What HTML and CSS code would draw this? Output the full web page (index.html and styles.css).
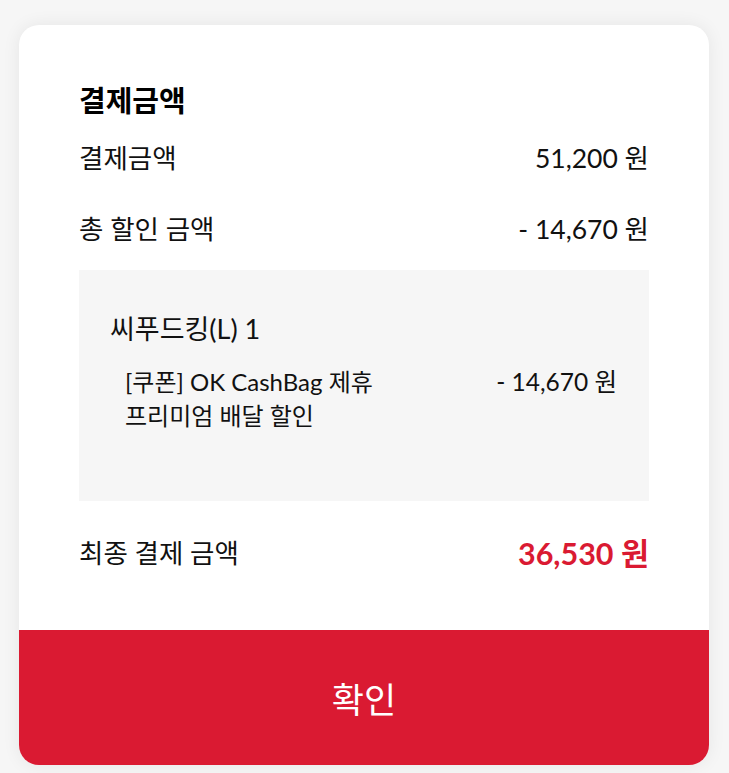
FILE: index.html
```html
<!DOCTYPE html>
<html lang="ko">
<head>
<meta charset="utf-8">
<link rel="stylesheet" href="styles.css">
</head>
<body>
<div class="card">
  <div class="content">
    <h2 class="title">결제금액</h2>
    <div class="row row-first">
      <span>결제금액</span>
      <span class="num">51,200 원</span>
    </div>
    <div class="row row-second">
      <span>총 할인 금액</span>
      <span class="num">- 14,670 원</span>
    </div>
    <div class="detail">
      <div class="detail-title">씨푸드킹(L) 1</div>
      <div class="item">
        <div class="item-name">[쿠폰] OK CashBag 제휴 프리미엄 배달 할인</div>
        <div class="item-amount">- 14,670 원</div>
      </div>
    </div>
    <div class="row row-final">
      <span>최종 결제 금액</span>
      <span class="total">36,530 원</span>
    </div>
  </div>
  <button class="confirm">확인</button>
</div>
</body>
</html>
```
FILE: styles.css
```css
html, body {
  margin: 0;
  padding: 0;
}
body {
  background: #f6f6f6;
  font-family: Lato, "Noto Sans CJK KR", sans-serif;
  color: #111;
  width: 729px;
  height: 773px;
  overflow: hidden;
}
.card {
  margin: 25px 0 0 19px;
  width: 690px;
  height: 740px;
  background: #fff;
  border-radius: 20px;
  box-shadow: 0 0 18px rgba(0, 0, 0, 0.07);
  display: flex;
  flex-direction: column;
  overflow: hidden;
}
.content {
  flex: 1;
  padding: 56px 60px 0 60px;
}
.title {
  margin: 0;
  font-size: 29px;
  font-weight: 700;
  line-height: 40px;
  color: #000;
}
.row {
  display: flex;
  justify-content: space-between;
  align-items: center;
  font-size: 26.5px;
  line-height: 40px;
}
.row-first { margin-top: 17px; }
.row-second { margin-top: 31px; }
.num { font-size: 26.5px; }
.detail {
  margin-top: 21px;
  background: #f6f6f6;
  padding: 39px 32px 68px 31px;
}
.detail-title {
  font-size: 27px;
  line-height: 40px;
}
.item {
  display: flex;
  margin-top: 16px;
  margin-left: 15px;
  font-size: 24px;
  line-height: 34px;
}
.item-name {
  width: 280px;
  word-break: keep-all;
}
.item-amount {
  margin-left: auto;
  font-size: 24.5px;
}
.row-final { margin-top: 32px; }
.total {
  color: #da1a32;
  font-weight: 700;
  font-size: 30.5px;
}
.confirm {
  height: 135px;
  border: none;
  background: #da1a32;
  color: #fff;
  font-family: Lato, "Noto Sans CJK KR", sans-serif;
  font-size: 35px;
  padding: 0;
  width: 100%;
}
```
